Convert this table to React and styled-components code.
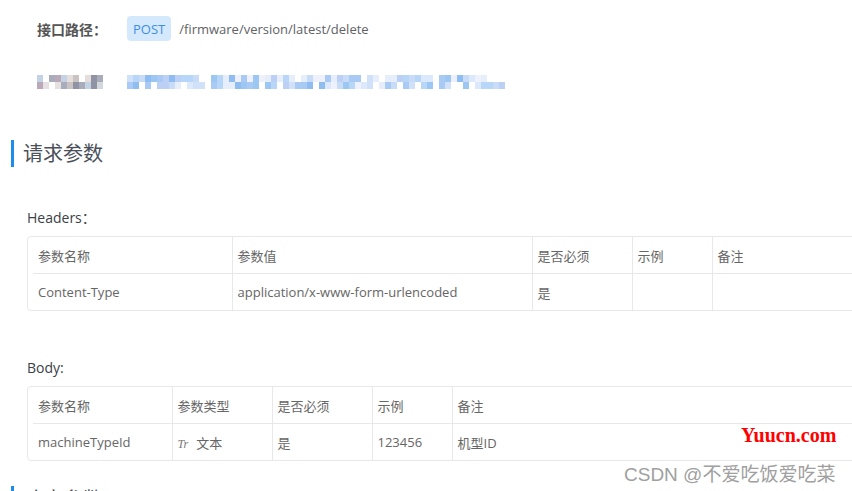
import React from "react";
import styled, { createGlobalStyle } from "styled-components";

const GlobalStyle = createGlobalStyle`
  html, body {
    margin: 0;
    padding: 0;
    background: #fff;
    overflow: hidden;
  }
  body {
    font-family: "Open Sans", "Noto Sans CJK SC", sans-serif;
    color: #606266;
  }
`;

const headerColumns = [
  { key: "name", title: "参数名称", width: 199 },
  { key: "value", title: "参数值", width: 300 },
  { key: "required", title: "是否必须", width: 100 },
  { key: "example", title: "示例", width: 80 },
  { key: "remark", title: "备注", width: 200 },
];

const headerRows = [
  {
    name: "Content-Type",
    value: "application/x-www-form-urlencoded",
    required: "是",
    example: "",
    remark: "",
  },
];

const bodyColumns = [
  { key: "name", title: "参数名称", width: 139 },
  { key: "type", title: "参数类型", width: 100 },
  { key: "required", title: "是否必须", width: 100 },
  { key: "example", title: "示例", width: 80 },
  { key: "remark", title: "备注", width: 400 },
];

const bodyRows = [
  {
    name: "machineTypeId",
    type: "text",
    required: "是",
    example: "123456",
    remark: "机型ID",
  },
];

// blurred (mosaic) line, as it is in the screenshot
const seeded = (seed) => {
  let s = seed;
  return () => {
    s = (s * 9301 + 49297) % 233280;
    return s / 233280;
  };
};

const grayTones = ["#b9a9b9", "#8f93a3", "#e6dedd", "#d3d7de", "#a9adbb", "#c3d3e4", "#c9c3c3", "#f1f4f8", "#a6aaa8", "#e5e1e2"];
const blueTones = ["#c8dcf8", "#a9caf5", "#dce8fb", "#eef0fb", "#b8d6f7", "#8fbdf2", "#d2e1fa", "#bcd0f6", "#e6eefc", "#9cc7f3"];

const Mosaic = ({ width, tones, seed }) => {
  const rand = seeded(seed);
  const cols = Math.floor(width / 6);
  const cells = [];
  for (let r = 0; r < 2; r++) {
    for (let c = 0; c < cols; c++) {
      const v = rand();
      if (v < 0.15) continue;
      cells.push(
        <rect
          key={`${r}-${c}`}
          x={c * 6}
          y={r * 7}
          width={6}
          height={7}
          fill={tones[Math.floor(rand() * tones.length)]}
        />
      );
    }
  }
  return (
    <svg width={width} height={14} viewBox={`0 0 ${width} 14`}>
      {cells}
    </svg>
  );
};

const App = () => {
  return (
    <Page>
      <GlobalStyle />
      <InfoRow>
        <InfoLabel>接口路径：</InfoLabel>
        <MethodTag>POST</MethodTag>
        <PathText>/firmware/version/latest/delete</PathText>
      </InfoRow>
      <BlurRow>
        <BlurLabel>
          <Mosaic width={66} tones={grayTones} seed={7} />
        </BlurLabel>
        <Mosaic width={378} tones={blueTones} seed={31} />
      </BlurRow>

      <SectionTitle>请求参数</SectionTitle>

      <Block>
        <BlockLabel>Headers：</BlockLabel>
        <ParamTable columns={headerColumns} rows={headerRows} />
      </Block>

      <Block $gap={47}>
        <BlockLabel>Body:</BlockLabel>
        <ParamTable columns={bodyColumns} rows={bodyRows} />
      </Block>

      <SectionTitle $gap={25}>响应参数</SectionTitle>

      <SiteMark>Yuucn.com</SiteMark>
      <AuthorMark>CSDN @不爱吃饭爱吃菜</AuthorMark>
    </Page>
  );
};

const ParamTable = ({ columns, rows }) => (
  <TableFrame>
    <Table>
      <colgroup>
        {columns.map((col) => (
          <col key={col.key} style={{ width: col.width }} />
        ))}
      </colgroup>
      <thead>
        <tr>
          {columns.map((col) => (
            <HeadCell key={col.key}>{col.title}</HeadCell>
          ))}
        </tr>
      </thead>
      <tbody>
        {rows.map((row, i) => (
          <tr key={i}>
            {columns.map((col) => (
              <BodyCell key={col.key}>
                {col.key === "type" ? (
                  <>
                    <TypeIcon>Tr</TypeIcon>文本
                  </>
                ) : (
                  row[col.key]
                )}
              </BodyCell>
            ))}
          </tr>
        ))}
      </tbody>
    </Table>
  </TableFrame>
);

const Page = styled.div`
  position: relative;
  width: 852px;
  height: 491px;
  padding-top: 16px;
  box-sizing: border-box;
  overflow: hidden;
`;

const InfoRow = styled.div`
  display: flex;
  align-items: center;
  height: 25px;
  padding-left: 37px;
`;

const InfoLabel = styled.div`
  width: 90px;
  font-size: 14px;
  font-weight: 600;
  color: #555;
`;

const MethodTag = styled.span`
  display: inline-flex;
  align-items: center;
  height: 25px;
  padding: 0 6px;
  border-radius: 4px;
  background: #d5e9fc;
  color: #3d8ee8;
  font-size: 13px;
`;

const PathText = styled.span`
  margin-left: 8px;
  font-size: 13px;
  color: #606266;
`;

const BlurRow = styled.div`
  display: flex;
  align-items: center;
  margin-top: 34px;
  height: 14px;
  padding-left: 37px;
`;

const BlurLabel = styled.div`
  width: 90px;
  display: flex;
`;

const SectionTitle = styled.h2`
  margin: ${(p) => p.$gap ?? 51}px 0 0 11px;
  height: 27px;
  line-height: 27px;
  padding-left: 9px;
  border-left: 3px solid #1e8ceb;
  font-size: 20px;
  font-weight: 400;
  color: #4a505a;
`;

const Block = styled.div`
  margin-top: ${(p) => p.$gap ?? 41}px;
  padding-left: 27px;
`;

const BlockLabel = styled.div`
  height: 20px;
  line-height: 20px;
  margin-bottom: 8px;
  font-size: 14px;
  color: #3a3f48;
`;

const TableFrame = styled.div`
  width: 1000px;
  border: 1px solid #e8e8e8;
  border-radius: 4px;
  padding-left: 5px;
  box-sizing: border-box;
`;

const Table = styled.table`
  border-collapse: collapse;
  table-layout: fixed;
  font-size: 13px;
  color: #666;

  tbody tr td {
    border-top: 1px solid #e8e8e8;
  }
`;

const HeadCell = styled.th`
  height: 36px;
  padding: 0 5px;
  text-align: left;
  font-weight: 400;
  & + & {
    border-left: 1px solid #e8e8e8;
  }
`;

const BodyCell = styled.td`
  height: 36px;
  padding: 0 5px;
  white-space: nowrap;
  & + & {
    border-left: 1px solid #e8e8e8;
  }
`;

const TypeIcon = styled.i`
  margin-right: 8px;
  font-family: "Liberation Serif", serif;
  font-size: 12px;
  color: #777;
`;

const SiteMark = styled.div`
  position: absolute;
  left: 741px;
  top: 424px;
  font-family: "Liberation Serif", serif;
  font-weight: 700;
  font-size: 20px;
  color: #ff0000;
`;

const AuthorMark = styled.div`
  position: absolute;
  left: 624px;
  top: 459px;
  font-family: "Liberation Sans", "Noto Sans CJK SC", sans-serif;
  font-size: 19px;
  color: #a0a0a0;
  text-shadow: 0 0 1px #fff;
`;

export default App;
